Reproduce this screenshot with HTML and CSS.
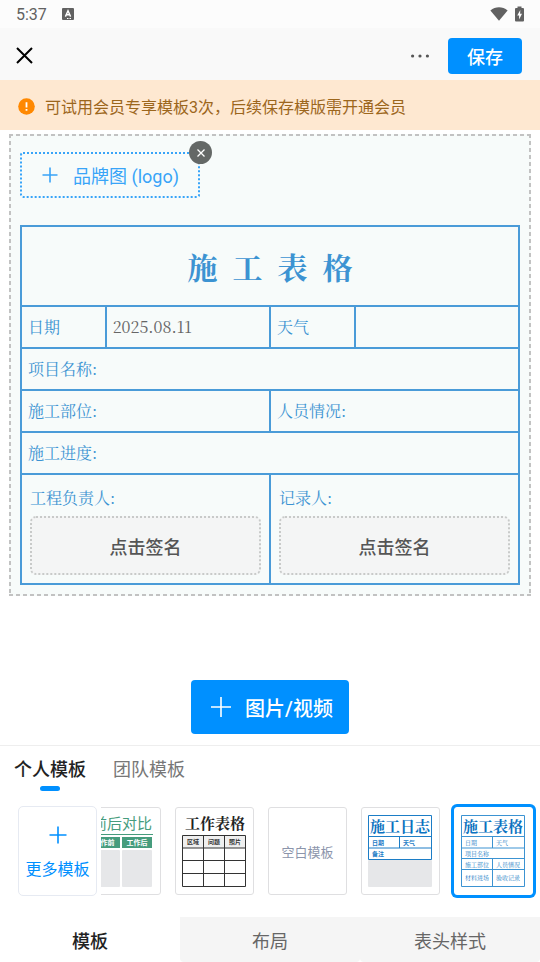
FILE: index.html
```html
<!DOCTYPE html>
<html lang="zh-CN">
<head>
    <meta charset="UTF-8">
    <meta name="viewport" content="width=device-width, initial-scale=1.0">
    <title>施工表格</title>
    <link rel="stylesheet" href="styles.css">
</head>
<body>

    <div class="status-bar">
        <span class="time">5:37</span>
        <svg class="status-app" width="12" height="12" viewBox="0 0 12 12">
            <rect width="12" height="12" rx="1" fill="#616161"/>
            <path d="M3.4 8.6 L6 2.8 L8.6 8.6 M4.4 6.8 H7.6" fill="none" stroke="#fff" stroke-width="1.4"/>
            <path d="M5 10.5 H6.5 M7.5 10.5 H9" stroke="#fff" stroke-width="1"/>
        </svg>
        <svg class="status-wifi" width="18" height="14" viewBox="0 0 18 14">
            <path d="M0.4 3.4 C5.4 -0.9 12.6 -0.9 17.6 3.4 L9 13.8 Z" fill="#616161"/>
        </svg>
        <svg width="9" height="16" viewBox="0 0 9 16">
            <path d="M2.5 0.5 H6.5 V2 H8 Q9 2 9 3 V14.5 Q9 15.5 8 15.5 H1 Q0 15.5 0 14.5 V3 Q0 2 1 2 H2.5 Z" fill="#616161"/>
            <path d="M5.3 4 L2.2 9.4 H4.1 V13.6 L7 7.8 H5.1 Z" fill="#fff"/>
        </svg>
    </div>

    <header class="top-bar">
        <button class="icon-btn" aria-label="关闭">
            <svg width="17" height="17" viewBox="0 0 17 17"><path d="M1 1 L16 16 M16 1 L1 16" stroke="#000" stroke-width="2" fill="none"/></svg>
        </button>
        <button class="icon-btn more-btn" aria-label="更多">
            <svg width="20" height="4" viewBox="0 0 20 4" fill="#555"><circle cx="2.6" cy="2" r="1.6"/><circle cx="10" cy="2" r="1.6"/><circle cx="17.4" cy="2" r="1.6"/></svg>
        </button>
        <button class="save-btn">保存</button>
    </header>

    <div class="notice">
        <svg width="17" height="17" viewBox="0 0 17 17"><circle cx="8.5" cy="8.5" r="8.3" fill="#ff8800"/><path d="M8.5 4.2 V9.6 M8.5 11 V12.8" stroke="#fff" stroke-width="1.8"/></svg>
        <span>可试用会员专享模板3次，后续保存模版需开通会员</span>
    </div>

    <main class="editor">
        <section class="sheet">
            <div class="logo-slot">
                <button class="logo-btn">
                    <svg width="16" height="16" viewBox="0 0 16 16"><path d="M8 0.5 V15.5 M0.5 8 H15.5" stroke="#38a4f8" stroke-width="1.6"/></svg>
                    <span>品牌图 (logo)</span>
                </button>
                <button class="logo-remove" aria-label="移除">
                    <svg width="8" height="8" viewBox="0 0 8 8"><path d="M0.5 0.5 L7.5 7.5 M7.5 0.5 L0.5 7.5" stroke="#fff" stroke-width="1.3"/></svg>
                </button>
            </div>

            <table class="form-table">
                <colgroup>
                    <col class="col-label">
                    <col class="col-value">
                    <col class="col-label">
                    <col class="col-value">
                </colgroup>
                <tbody>
                    <tr class="title-row">
                        <th colspan="4"><div class="form-title"><span>施</span><span>工</span><span>表</span><span>格</span></div></th>
                    </tr>
                    <tr>
                        <td>日期</td>
                        <td class="value">2025.08.11</td>
                        <td>天气</td>
                        <td></td>
                    </tr>
                    <tr>
                        <td colspan="4">项目名称:</td>
                    </tr>
                    <tr>
                        <td colspan="2">施工部位:</td>
                        <td colspan="2">人员情况:</td>
                    </tr>
                    <tr>
                        <td colspan="4">施工进度:</td>
                    </tr>
                    <tr class="sign-row">
                        <td colspan="2">
                            <div class="sign-label">工程负责人:</div>
                            <button class="sign-btn">点击签名</button>
                        </td>
                        <td colspan="2">
                            <div class="sign-label">记录人:</div>
                            <button class="sign-btn">点击签名</button>
                        </td>
                    </tr>
                </tbody>
            </table>
        </section>

        <button class="media-btn">
            <svg width="20" height="20" viewBox="0 0 20 20"><path d="M10 0 V20 M0 10 H20" stroke="#fff" stroke-width="1.6"/></svg>
            <span>图片/视频</span>
        </button>
    </main>

    <section class="templates">
        <div class="group-tabs">
            <button class="group-tab active">个人模板</button>
            <button class="group-tab">团队模板</button>
        </div>

        <div class="template-row">
            <button class="more-card">
                <svg width="18" height="18" viewBox="0 0 18 18"><path d="M9 0.5 V17.5 M0.5 9 H17.5" stroke="#0090ff" stroke-width="1.6"/></svg>
                <span>更多模板</span>
            </button>

            <div class="strip">
                <button class="thumb">
                    <svg viewBox="0 0 77 86">
                        <text class="sans" x="39" y="21" font-size="15" fill="#469c7d" text-anchor="middle">前后对比</text>
                        <rect x="6" y="26" width="64" height="1" fill="#469c7d"/>
                        <rect x="6" y="29" width="31" height="11" fill="#469c7d"/>
                        <rect x="39" y="29" width="30" height="11" fill="#469c7d"/>
                        <text class="sans bold" x="21" y="37" font-size="7" fill="#fff" text-anchor="middle">工作前</text>
                        <text class="sans bold" x="54" y="37" font-size="7" fill="#fff" text-anchor="middle">工作后</text>
                        <rect x="6" y="42" width="31" height="37" rx="1" fill="#e6e7e9"/>
                        <rect x="39" y="42" width="30" height="37" rx="1" fill="#e6e7e9"/>
                    </svg>
                </button>

                <button class="thumb">
                    <svg viewBox="0 0 77 86">
                        <text class="serif bold" x="39" y="21" font-size="15" fill="#222" text-anchor="middle">工作表格</text>
                        <rect x="6" y="28" width="63" height="12" fill="#efefef"/>
                        <path d="M6.500 27.500 H69.500 V78.500 H6.500 Z M6.500 40 H69.500 M6.500 52.500 H69.500 M6.500 65.500 H69.500 M27.500 27.500 V78.500 M48.500 27.500 V78.500" fill="none" stroke="#333" stroke-width="1"/>
                        <text class="sans bold" x="17" y="36" font-size="6" fill="#333" text-anchor="middle">区域</text>
                        <text class="sans bold" x="38" y="36" font-size="6" fill="#333" text-anchor="middle">问题</text>
                        <text class="sans bold" x="59" y="36" font-size="6" fill="#333" text-anchor="middle">照片</text>
                    </svg>
                </button>

                <button class="thumb blank">空白模板</button>

                <button class="thumb">
                    <svg viewBox="0 0 77 86">
                        <path d="M6.500 7.500 H69.500 V51.500 H6.500 Z M6.500 28.500 H69.500 M6.500 40 H69.500 M37.500 28.500 V40" fill="none" stroke="#1c7dc6" stroke-width="1"/>
                        <text class="serif bold" x="38" y="24" font-size="15" fill="#0b72c0" text-anchor="middle">施工日志</text>
                        <text class="sans bold" x="10" y="37" font-size="6" fill="#1c7dc6">日期</text>
                        <text class="sans bold" x="41" y="37" font-size="6" fill="#1c7dc6">天气</text>
                        <text class="sans bold" x="10" y="48" font-size="6" fill="#1c7dc6">备注</text>
                        <rect x="6" y="52" width="64" height="27" rx="1" fill="#e6e7e9"/>
                    </svg>
                </button>

                <button class="thumb selected">
                    <svg viewBox="0 0 77 86">
                        <path d="M6.500 7.500 H69.500 V78.500 H6.500 Z M6.500 28.500 H69.500 M6.500 40 H69.500 M6.500 50.500 H69.500 M6.500 61.500 H69.500 M37.500 28.500 V40 M37.500 50.500 V78.500" fill="none" stroke="#3c93d2" stroke-width="1"/>
                        <text class="serif bold" x="38" y="24" font-size="15" fill="#0b72c0" text-anchor="middle">施工表格</text>
                        <text class="serif" x="10" y="37" font-size="6" fill="#1c7dc6">日期</text>
                        <text class="serif" x="41" y="37" font-size="6" fill="#1c7dc6">天气</text>
                        <text class="serif" x="10" y="48" font-size="6" fill="#1c7dc6">项目名称</text>
                        <text class="serif" x="10" y="59" font-size="6" fill="#1c7dc6">施工部位</text>
                        <text class="serif" x="41" y="59" font-size="6" fill="#1c7dc6">人员情况</text>
                        <text class="serif" x="10" y="72" font-size="6" fill="#1c7dc6">材料进场</text>
                        <text class="serif" x="41" y="72" font-size="6" fill="#1c7dc6">验收记录</text>
                    </svg>
                </button>
            </div>
        </div>
    </section>

    <nav class="bottom-tabs">
        <button class="bottom-tab active">模板</button>
        <button class="bottom-tab">布局</button>
        <button class="bottom-tab">表头样式</button>
    </nav>

</body>
</html>
```
FILE: styles.css
```css
* {
    box-sizing: border-box;
}
body {
    margin: 0;
    min-height: 100vh;
    display: flex;
    flex-direction: column;
    background: #fff;
    color: #222;
    font-family: Roboto, "Noto Sans CJK SC", sans-serif;
}
button {
    margin: 0;
    padding: 0;
    border: none;
    background: none;
    color: inherit;
    font-family: inherit;
    white-space: nowrap;
    cursor: pointer;
}
svg {
    display: block;
    flex: none;
}

/* barra superior */
.status-bar {
    height: 28px;
    padding: 0 16px;
    display: flex;
    align-items: center;
    background: #fcfcfc;
}
.time {
    font-size: 16px;
    color: #616161;
}
.status-app {
    margin-left: 15px;
}
.status-wifi {
    margin-left: auto;
    margin-right: 7px;
}
.top-bar {
    height: 52px;
    padding: 3px 18px 0 16px;
    display: flex;
    align-items: center;
    background: #f9f9f9;
}
.icon-btn {
    display: flex;
    align-items: center;
}
.more-btn {
    margin-left: auto;
    margin-right: 18px;
}
.save-btn {
    width: 74px;
    height: 36px;
    border-radius: 4px;
    background: #0090ff;
    color: #fff;
    font-size: 18px;
    font-weight: 500;
}
.notice {
    height: 50px;
    padding: 2px 18px 0;
    display: flex;
    align-items: center;
    gap: 10px;
    background: #fee8d1;
    color: #9c661c;
    font-size: 16px;
}

/* editor */
.editor {
    flex: 1;
    padding: 4px 9px 11px;
    display: flex;
    flex-direction: column;
    align-items: center;
    justify-content: space-between;
}
.sheet {
    width: 100%;
    padding: 18px 11px 11px;
    background:
        repeating-linear-gradient(90deg, #c2c2c2 0 4px, transparent 4px 7px) top / 100% 2px no-repeat,
        repeating-linear-gradient(90deg, #c2c2c2 0 4px, transparent 4px 7px) bottom / 100% 2px no-repeat,
        repeating-linear-gradient(#c2c2c2 0 4px, transparent 4px 7px) left / 2px 100% no-repeat,
        repeating-linear-gradient(#c2c2c2 0 4px, transparent 4px 7px) right / 2px 100% no-repeat,
        #f7fbfa;
}
.logo-slot {
    position: relative;
    width: 180px;
}
.logo-btn {
    width: 100%;
    height: 46px;
    padding: 0 20px;
    display: flex;
    align-items: center;
    gap: 15px;
    border: 2px dotted #38a4f8;
    border-radius: 3px;
    color: #38a4f8;
    font-size: 18px;
}
.logo-remove {
    position: absolute;
    top: -11px;
    right: -12px;
    width: 23px;
    height: 23px;
    display: flex;
    align-items: center;
    justify-content: center;
    border-radius: 50%;
    background: #646866;
}
.form-table {
    width: 100%;
    margin-top: 27px;
    table-layout: fixed;
    border-collapse: collapse;
    color: #3c93d2;
    font-family: "Noto Serif CJK SC", "Liberation Serif", "Noto Sans CJK SC", serif;
    font-size: 16px;
    line-height: 24px;
}
.col-label {
    width: 17%;
}
.col-value {
    width: 33%;
}
.form-table th, .form-table td {
    height: 42px;
    padding: 0 6px;
    border: 2px solid #4a9bd8;
    text-align: left;
}
.form-table .title-row th {
    height: 80px;
}
.form-title {
    display: flex;
    justify-content: center;
    gap: 15px;
    font-size: 30px;
    line-height: 40px;
}
.form-table .value {
    color: #666;
}
.form-table .sign-row td {
    height: 110px;
    padding: 11px 8px 8px;
}
.sign-btn {
    display: block;
    width: 100%;
    height: 59px;
    margin-top: 6px;
    border: 2px dotted #c8cac9;
    border-radius: 6px;
    background: #f4f5f5;
    color: #555;
    font-family: Roboto, "Noto Sans CJK SC", sans-serif;
    font-size: 18px;
    font-weight: 500;
}
.media-btn {
    width: 158px;
    height: 54px;
    padding-left: 4px;
    display: flex;
    align-items: center;
    justify-content: center;
    gap: 14px;
    border-radius: 4px;
    background: #0090ff;
    color: #fff;
    font-size: 20px;
    font-weight: 500;
}

/* plantillas */
.templates {
    border-top: 1px solid #eee;
}
.group-tabs {
    display: flex;
    gap: 27px;
    padding: 10px 14px 0;
}
.group-tab {
    height: 36px;
    display: flex;
    flex-direction: column;
    justify-content: flex-start;
    align-items: center;
    color: #777;
    font-size: 18px;
    line-height: 28px;
}
.group-tab.active {
    color: #222;
    font-weight: 500;
}
.group-tab.active::after {
    content: "";
    width: 20px;
    height: 5px;
    flex: none;
    margin-top: 2px;
    border-radius: 3px;
    background: #0090ff;
}
.template-row {
    display: flex;
    gap: 4px;
    padding: 10px 0 17px 18px;
}
.more-card {
    flex: none;
    width: 79px;
    height: 90px;
    margin-top: 4px;
    padding-top: 4px;
    display: flex;
    flex-direction: column;
    align-items: center;
    justify-content: center;
    gap: 12px;
    border: 1px solid #e6eaf2;
    border-radius: 5px;
    color: #0090ff;
    font-size: 16px;
}
.strip {
    flex: 1;
    display: flex;
    justify-content: flex-end;
    gap: 14px;
    padding: 5px 7px 5px 0;
    overflow: hidden;
}
.thumb {
    flex: none;
    width: 79px;
    height: 88px;
    border: 1px solid #dfdfe1;
    border-radius: 3px;
    background: #fff;
}
.thumb.selected {
    border-color: #fff;
    box-shadow: 0 0 0 3px #0090ff;
}
.thumb.blank {
    color: #8c95ab;
    font-size: 13px;
}
.thumb .sans {
    font-family: "Noto Sans CJK SC", sans-serif;
}
.thumb .serif {
    font-family: "Noto Serif CJK SC", "Liberation Serif", "Noto Sans CJK SC", serif;
}
.thumb .bold {
    font-weight: 700;
}

.bottom-tabs {
    display: flex;
}
.bottom-tab {
    flex: 1;
    height: 45px;
    border-radius: 0 0 4px 4px;
    background: #f5f5f5;
    color: #666;
    font-size: 18px;
}
.bottom-tab.active {
    background: #fff;
    color: #222;
    font-weight: 500;
}
```
